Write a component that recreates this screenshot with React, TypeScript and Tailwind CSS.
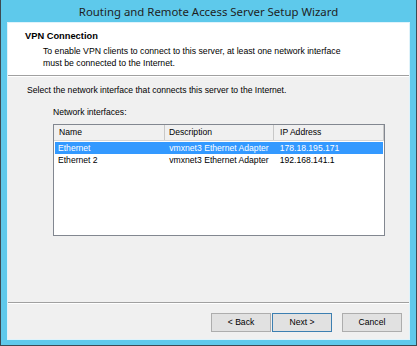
import React from 'react';

const interfaces = [
  { name: 'Ethernet', description: 'vmxnet3 Ethernet Adapter', ip: '178.18.195.171', selected: true },
  { name: 'Ethernet 2', description: 'vmxnet3 Ethernet Adapter', ip: '192.168.141.1', selected: false },
];

const WizardButton: React.FC<{ label: string; primary?: boolean }> = ({ label, primary }) => (
  <button
    className={
      'h-[19px] w-[60px] bg-[#e1e1e1] text-[8.6px] text-black border ' +
      (primary ? 'border-[#3c7fb1]' : 'border-[#adadad]')
    }
  >
    {label}
  </button>
);

export default function App() {
  return (
    <div className="w-[417px] h-[346px] flex flex-col bg-[#5ec9eb] border-x border-b border-[#3d4a52] font-['Liberation_Sans',Arial,sans-serif] text-black">
      <div className="h-[22px] flex items-center justify-center font-['Noto_Sans',sans-serif] text-[11.4px] text-[#1e1e1e] pt-[1px]">
        Routing and Remote Access Server Setup Wizard
      </div>

      <div className="flex-1 mx-[6px] mb-[5px] border border-[#dff3fb] flex flex-col bg-[#f0f0f0]">
        {/* header */}
        <div className="h-[53px] bg-white border-b border-[#a0a0a0] pl-[17px] pt-[8px]">
          <div className="text-[9.3px] font-bold leading-[11px]">VPN Connection</div>
          <div className="pl-[18px] pt-[3px] text-[8.7px] leading-[12px]">
            <div>To enable VPN clients to connect to this server, at least one network interface</div>
            <div>must be connected to the Internet.</div>
          </div>
        </div>

        {/* body */}
        <div className="flex-1 border-t border-white pl-[19px] pt-[7px] text-[8.6px]">
          <div className="leading-[12px]">Select the network interface that connects this server to the Internet.</div>
          <div className="pl-[26px] pt-[10px]">
            <div className="leading-[12px]">Network interfaces:</div>
            <div className="mt-[6px] w-[332px] h-[112px] border border-[#828790] bg-white">
              <div className="flex h-[16px] bg-[#f0f0f0] border-b border-[#d5d5d5]">
                <div className="w-[111px] pl-[5px] border-r border-[#c8c8c8] flex items-center">Name</div>
                <div className="w-[109px] pl-[4px] border-r border-[#c8c8c8] flex items-center">Description</div>
                <div className="w-[110px] pl-[6px] border-r border-[#c8c8c8] flex items-center">IP Address</div>
              </div>
              <div className="pt-[1px] px-[1px]">
                {interfaces.map((row) => (
                  <div
                    key={row.name}
                    className={
                      'flex h-[12px] items-center ' + (row.selected ? 'bg-[#3399ff] text-white' : '')
                    }
                  >
                    <div className="w-[111px] pl-[3px]">{row.name}</div>
                    <div className="w-[109px] pl-[4px]">{row.description}</div>
                    <div className="w-[110px] pl-[6px]">{row.ip}</div>
                  </div>
                ))}
              </div>
            </div>
          </div>
        </div>

        {/* footer */}
        <div className="h-[37px] border-t border-[#a0a0a0] flex flex-col">
          <div className="flex-1 border-t border-white flex items-start justify-end pt-[9px] pr-[7px]">
            <div className="flex">
              <WizardButton label="< Back" />
              <div className="w-[1px]" />
              <WizardButton label="Next >" primary />
              <div className="w-[10px]" />
              <WizardButton label="Cancel" />
            </div>
          </div>
        </div>
      </div>
    </div>
  );
}
